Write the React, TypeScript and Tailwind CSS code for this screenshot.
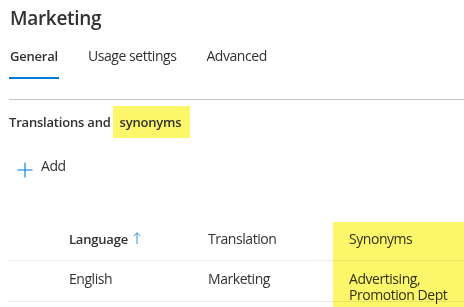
const PlusIcon = () => (
  <svg width="16" height="16" viewBox="0 0 16 16" className="mt-[6px] shrink-0" fill="none">
    <path d="M8 0.5v15M0.5 8h15" stroke="#0078d4" strokeWidth="1.1" />
  </svg>
);

const tabs = ['General', 'Usage settings', 'Advanced'];

export default function App() {
  return (
    <div
      className="min-h-screen bg-white pl-[9px] text-[#323130] tracking-[-0.45px]"
      style={{ fontFamily: '"Open Sans", "Segoe UI", sans-serif' }}
    >
      {/* header */}
      <h1 className="ml-[1px] pt-[4px] text-[19px] font-semibold leading-[28px] tracking-[-0.3px]">Marketing</h1>

      {/* tabs */}
      <div className="mt-[14px] flex gap-[28px]">
        {tabs.map((t, i) => (
          <div key={t} className="flex flex-col">
            <span
              className={`px-[1px] leading-[20px] ${i === 0 ? 'text-[13px] font-semibold tracking-[-0.2px]' : 'text-[14px]'}`}
            >
              {t}
            </span>
            <span className={`mt-[11px] h-[2px] ${i === 0 ? 'bg-[#0078d4]' : 'bg-transparent'}`}></span>
          </div>
        ))}
      </div>
      <div className="mt-[20px] h-px bg-[#c8c6c4]"></div>

      {/* section title */}
      <div className="mt-[6px] flex h-[32px] items-center text-[13px] font-semibold leading-[20px] tracking-[-0.2px]">
        <span>Translations and</span>
        <span className="ml-[2px] flex h-[32px] items-center bg-[#fcf76a] pl-[7px] pr-[9px]">synonyms</span>
      </div>

      {/* add button */}
      <div className="mt-[18px] flex items-start pl-[8px] text-[14px] leading-[20px]">
        <PlusIcon />
        <span className="ml-[8px]">Add</span>
      </div>

      {/* table */}
      <div className="relative ml-[-1px] mt-[44px] text-[14px]">
        <div className="grid h-[39px] grid-cols-[200px_140px_1fr] border-b border-[#edebe9] pt-[7px] leading-[20px]">
          <div className="flex items-start pl-[61px] text-[13px] font-semibold tracking-[-0.2px]">
            Language
            <svg width="8" height="12" viewBox="0 0 8 12" className="ml-[5px] mt-[3px]" fill="none">
              <path d="M4 0.8v11.2M0.8 4l3.2-3.2 3.2 3.2" stroke="#3a8fd8" strokeWidth="1" />
            </svg>
          </div>
          <div>Translation</div>
          <div className="pl-[1px]">Synonyms</div>
        </div>
        <div className="grid h-[41px] grid-cols-[200px_140px_1fr] border-b border-[#edebe9] pt-[10px] leading-[16px]">
          <div className="pl-[61px]">English</div>
          <div>Marketing</div>
          <div className="pl-[1px] whitespace-pre-line">{'Advertising,\nPromotion Dept'}</div>
        </div>
        <div className="pointer-events-none absolute left-[325px] right-0 top-0 h-[87px] bg-[#fcf76a] mix-blend-multiply"></div>
      </div>
    </div>
  );
}
